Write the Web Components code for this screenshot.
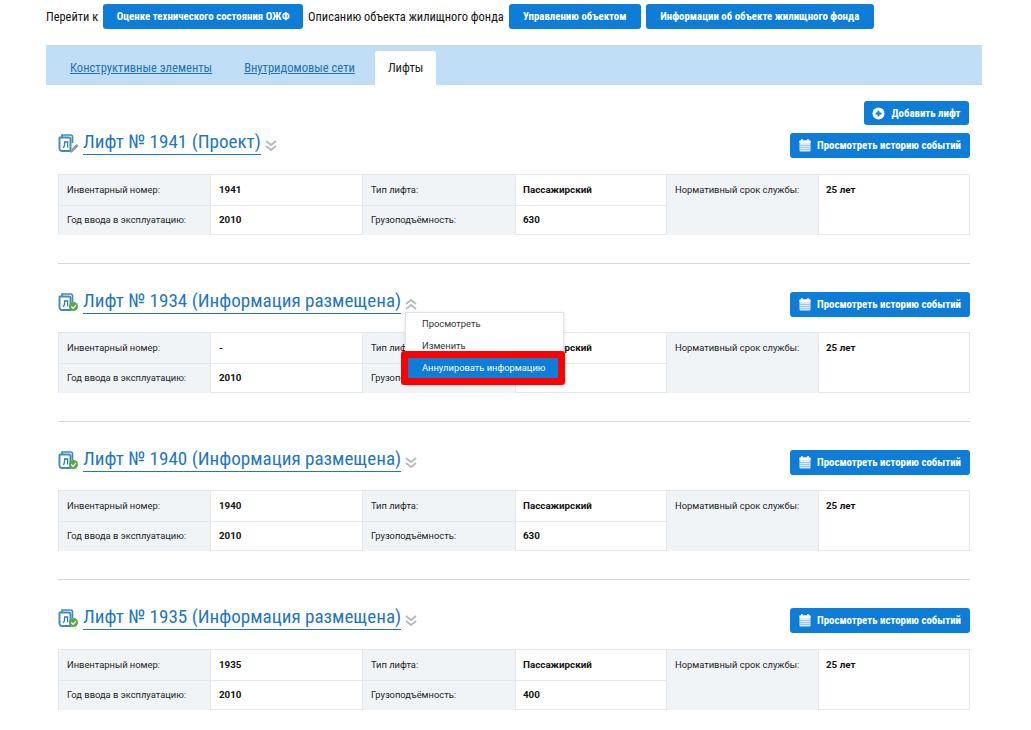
<!DOCTYPE html>
<html lang="ru">
<head>
<meta charset="utf-8">
<title>Лифты</title>
<style>
  html, body { margin: 0; background: #fff; }
  body { font-family: Roboto, "Liberation Sans", sans-serif; color: #111; width: 1031px; height: 730px; overflow: hidden; }
  .page { display: block; padding: 4px 49px 0 46px; }
  .add-row { display: flex; justify-content: flex-end; padding: 16px 13px 0 0; margin-bottom: 8px; }
</style>
</head>
<body>
<div class="page">
  <top-nav>
    Перейти к
    <blue-btn style="width:200px">Оценке технического состояния ОЖФ</blue-btn>
    Описанию объекта жилищного фонда
    <blue-btn style="width:132px">Управлению объектом</blue-btn>
    <blue-btn style="width:228px">Информации об объекте жилищного фонда</blue-btn>
  </top-nav>
  <tab-bar></tab-bar>
  <div class="add-row"><blue-btn icon="plus" compact style="width:105px">Добавить лифт</blue-btn></div>
  <lift-card number="1941" status="Проект" inv="1941" year="2010" kind="Пассажирский" load="630" state="draft"></lift-card>
  <lift-card number="1934" status="Информация размещена" inv="-" year="2010" kind="Пассажирский" load="630" open></lift-card>
  <lift-card number="1940" status="Информация размещена" inv="1940" year="2010" kind="Пассажирский" load="630"></lift-card>
  <lift-card number="1935" status="Информация размещена" inv="1935" year="2010" kind="Пассажирский" load="400" last></lift-card>
</div>

<script>
// Blue button, optional icon on the left
class BlueBtn extends HTMLElement {
  constructor() {
    super();
    this.attachShadow({ mode: 'open' });
    const icons = {
      plus: `<svg width="13" height="13" viewBox="0 0 13 13"><circle cx="6.5" cy="6.5" r="6" fill="#fff"/><path d="M6.5 3.5v6M3.5 6.5h6" stroke="#0d7dd8" stroke-width="1.8"/></svg>`,
      calendar: `<svg width="12" height="13" viewBox="0 0 12 13"><rect x="0.5" y="1.5" width="11" height="11" rx="1" fill="#dfe9f8"/><rect x="0.5" y="1.5" width="11" height="2.500" fill="#fff"/><path d="M3 0v3M9 0v3" stroke="#fff" stroke-width="1.500"/><path d="M1 6.500h10M1 8.500h10M1 10.500h10" stroke="#0d7dd8" stroke-width=".5" opacity=".6"/></svg>`
    };
    const name = this.getAttribute('icon');
    this.shadowRoot.innerHTML = `
      <style>
        :host { display: inline-flex; align-items: center; justify-content: center; gap: 6px;
          height: 25px; padding: 0 13px; background: #0d7dd8; color: #fff; border-radius: 3px;
          font: 700 10.85px Roboto, sans-serif; font-stretch: 75%; white-space: nowrap; box-sizing: border-box; }
        :host([icon]) { padding: 0 9px; }
        :host([compact]) { height: 24px; gap: 6px; padding: 0 8px; }
        svg { display: block; }
      </style>
      ${name ? icons[name] : ''}<slot></slot>`;
  }
}
customElements.define('blue-btn', BlueBtn);

class TopNav extends HTMLElement {
  constructor() {
    super();
    this.attachShadow({ mode: 'open' });
    this.shadowRoot.innerHTML = `
      <style>
        :host { display: flex; align-items: center; gap: 5px; height: 25px; font-size: 12.4px; font-stretch: 75%; white-space: nowrap; color: #111; }
      </style>
      <slot></slot>`;
  }
}
customElements.define('top-nav', TopNav);

class TabBar extends HTMLElement {
  constructor() {
    super();
    this.attachShadow({ mode: 'open' });
    this.shadowRoot.innerHTML = `
      <style>
        :host { display: flex; align-items: flex-end; height: 40px; margin-top: 16px; padding-left: 24px;
          background: #c0dff7; font-size: 12.55px; font-stretch: 75%; box-sizing: border-box; width: 936px; }
        a { display: block; height: 34px; line-height: 34px; margin-right: 32px; color: #2270b5; text-decoration: underline; }
        a.on { background: #fff; color: #222; text-decoration: none; border-radius: 3px 3px 0 0; padding: 0 13px; margin: 0 0 0 -12px; }
      </style>
      <a>Конструктивные элементы</a>
      <a>Внутридомовые сети</a>
      <a class="on">Лифты</a>`;
  }
}
customElements.define('tab-bar', TabBar);

// One lift: heading with status, history button and the info table
class LiftCard extends HTMLElement {
  constructor() {
    super();
    this.attachShadow({ mode: 'open' });
    const a = (n) => this.getAttribute(n);
    const open = this.hasAttribute('open');
    const badge = a('state') === 'draft'
      ? `<path d="M12 17.500l6.500-6.500 2 2-6.500 6.500h-2z" fill="#8f9aa3"/>`
      : `<circle cx="15.500" cy="14.500" r="4.500" fill="#5aa845"/><path d="M13.300 14.500l1.800 1.800 2.800-3.200" fill="none" stroke="#fff" stroke-width="1.200"/>`;
    const chevron = open ? 'M1 6l5-4 5 4M1 11l5-4 5 4' : 'M1 2l5 4 5-4M1 7l5 4 5-4';
    const menu = open ? `
      <div class="menu">
        <div class="item">Просмотреть</div>
        <div class="item">Изменить</div>
        <div class="item active">Аннулировать информацию</div>
      </div>
      <div class="mark"></div>` : '';
    this.shadowRoot.innerHTML = `
      <style>
        :host { display: block; position: relative; margin-left: 12px; width: 912px; font-size: 9.35px; }
        :host([state]) .head, :host([last]) .head { margin-bottom: 16px; }
        .head { display: flex; align-items: flex-start; justify-content: space-between; height: 25px; margin-bottom: 15px; }
        .title { display: flex; align-items: flex-start; }
        .doc { display: block; margin: 0 4px 0 0; }
        h2 { margin: 0; font-weight: 400; font-size: 19.1px; font-stretch: 75%; line-height: 18px; height: 18px; padding-bottom: 3px; color: #1f77bd; border-bottom: 1px solid #1f77bd; white-space: nowrap; box-sizing: content-box; }
        .chev { display: block; margin: 6px 0 0 4px; }
        .info { display: grid; grid-template-columns: 152px 152px 153px 151px 152px 152px; grid-template-rows: 30px 30px;
          border: 1px solid #e3e8ec; border-width: 1px 1px 1px 0; box-sizing: border-box; height: 61px; }
        .info > div { padding: 9px 8px 0 8px; box-sizing: border-box; border-left: 1px solid #e3e8ec; color: #222; line-height: 12px; }
        .info > .r2 { border-top: 1px solid #e3e8ec; padding-top: 8px; }
        .l { background: #f0f4f7; }
        .info > .v { font-weight: 700; color: #111; font-size: 9.8px; }
        .info > .tight { padding-left: 7px; }
        .span { grid-row: 1 / 3; grid-column: 5; }
        .spanv { grid-row: 1 / 3; grid-column: 6; }
        hr { border: 0; border-top: 1px solid #d5d9dc; margin: 28px 0; }
        .menu { position: absolute; left: 347px; top: 20px; width: 159px; background: #fff; border: 1px solid #e2e4e6;
          box-shadow: 0 1px 4px rgba(0,0,0,.12); box-sizing: border-box; padding: 0 3px 5px 1px; z-index: 2; }
        .item { height: 22px; line-height: 22px; padding-left: 15px; color: #333; white-space: nowrap; }
        .item.active { background: #0d7dd8; color: #fff; height: 21px; line-height: 21px; }
        .mark { position: absolute; left: 343px; top: 59px; width: 164px; height: 34px; box-sizing: border-box;
          border: 7px solid #f00; border-radius: 3px; z-index: 3; }
      </style>
      <div class="head">
        <div class="title">
          <svg class="doc" width="21" height="21" viewBox="0 0 21 21">
            <path d="M4 4V2h8.500a2 2 0 0 1 2 2V10" fill="none" stroke="#3f8bbf" stroke-width="1.700"/>
            <path d="M2 4.500h9a1.500 1.500 0 0 1 1.500 1.500V18H4a2.500 2.500 0 0 1-2.500-2.500V5z" fill="#fff" stroke="#3f8bbf" stroke-width="1.900"/>
            <path d="M5 14.500c1 0 1.300-.6 1.400-2l.2-3.500h3v5.500" fill="none" stroke="#2f7aae" stroke-width="1.300"/>
            ${badge}
          </svg>
          <h2>Лифт № ${a('number')} (${a('status')})</h2>
          <svg class="chev" width="12" height="13" viewBox="0 0 12 13"><path d="${chevron}" fill="none" stroke="#b4bbc0" stroke-width="1.800"/></svg>
        </div>
        <blue-btn icon="calendar">Просмотреть историю событий</blue-btn>
      </div>
      <div class="info">
        <div class="l">Инвентарный номер:</div><div class="v">${a('inv')}</div>
        <div class="l">Тип лифта:</div><div class="v tight">${a('kind')}</div>
        <div class="l span">Нормативный срок службы:</div><div class="v spanv tight">25 лет</div>
        <div class="l r2">Год ввода в эксплуатацию:</div><div class="v r2">${a('year')}</div>
        <div class="l r2">Грузоподъёмность:</div><div class="v r2 tight">${a('load')}</div>
      </div>
      ${menu}
      ${this.hasAttribute('last') ? '' : '<hr>'}`;
  }
}
customElements.define('lift-card', LiftCard);
</script>
</body>
</html>
